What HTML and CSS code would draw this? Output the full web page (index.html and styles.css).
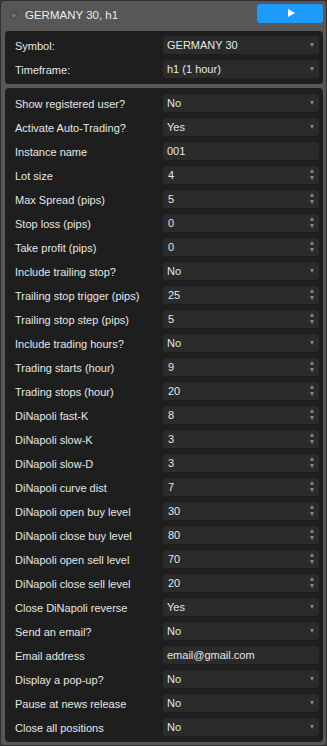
FILE: index.html
```html
<!doctype html>
<html>
<head>
<meta charset="utf-8">
<title>GERMANY 30, h1</title>
<link rel="stylesheet" href="styles.css">
</head>
<body>
<div class="win">
    <div class="head">
        <span class="dot"></span>
        <span class="title">GERMANY 30, h1</span>
        <button class="runBtn" type="button"><i></i></button>
    </div>

    <div class="panel">
        <div class="row"><label>Symbol:</label><div class="field sel">GERMANY 30</div></div>
        <div class="row"><label>Timeframe:</label><div class="field sel">h1 (1 hour)</div></div>
    </div>

    <div class="panel">
        <div class="row"><label>Show registered user?</label><div class="field sel">No</div></div>
        <div class="row"><label>Activate Auto-Trading?</label><div class="field sel">Yes</div></div>
        <div class="row"><label>Instance name</label><div class="field">001</div></div>
        <div class="row"><label>Lot size</label><div class="field num">4</div></div>
        <div class="row"><label>Max Spread (pips)</label><div class="field num">5</div></div>
        <div class="row"><label>Stop loss (pips)</label><div class="field num">0</div></div>
        <div class="row"><label>Take profit (pips)</label><div class="field num">0</div></div>
        <div class="row"><label>Include trailing stop?</label><div class="field sel">No</div></div>
        <div class="row"><label>Trailing stop trigger (pips)</label><div class="field num">25</div></div>
        <div class="row"><label>Trailing stop step (pips)</label><div class="field num">5</div></div>
        <div class="row"><label>Include trading hours?</label><div class="field sel">No</div></div>
        <div class="row"><label>Trading starts (hour)</label><div class="field num">9</div></div>
        <div class="row"><label>Trading stops (hour)</label><div class="field num">20</div></div>
        <div class="row"><label>DiNapoli fast-K</label><div class="field num">8</div></div>
        <div class="row"><label>DiNapoli slow-K</label><div class="field num">3</div></div>
        <div class="row"><label>DiNapoli slow-D</label><div class="field num">3</div></div>
        <div class="row"><label>DiNapoli curve dist</label><div class="field num">7</div></div>
        <div class="row"><label>DiNapoli open buy level</label><div class="field num">30</div></div>
        <div class="row"><label>DiNapoli close buy level</label><div class="field num">80</div></div>
        <div class="row"><label>DiNapoli open sell level</label><div class="field num">70</div></div>
        <div class="row"><label>DiNapoli close sell level</label><div class="field num">20</div></div>
        <div class="row"><label>Close DiNapoli reverse</label><div class="field sel">Yes</div></div>
        <div class="row"><label>Send an email?</label><div class="field sel">No</div></div>
        <div class="row"><label>Email address</label><div class="field">email@gmail.com</div></div>
        <div class="row"><label>Display a pop-up?</label><div class="field sel">No</div></div>
        <div class="row"><label>Pause at news release</label><div class="field sel">No</div></div>
        <div class="row"><label>Close all positions</label><div class="field sel">No</div></div>
    </div>
</div>
</body>
</html>
```

FILE: styles.css
```css
*{ margin:0; padding:0; box-sizing:border-box}
body{ background:#3a3a3a; font-family:"Liberation Sans", Arial, sans-serif; font-size:11px; color:#e6e6e6}
.win{ width:327px; height:746px; background:#575757; border:1px solid #2f2f2f; border-radius:4px; padding:0 3px 3px 4px; display:flex; flex-direction:column; gap:4px}
.head{ height:29px; display:flex; align-items:center; padding:1px 0 0 5px}
.head .dot{ width:7px; height:7px; border-radius:50%; background:#6e6e6e; border:1px solid #3c3c3c; margin:2px 8px 0 0}
.head .title{ flex:1; font-size:11.5px; color:#ececec; padding-top:1px}
.runBtn{ width:66px; height:19px; border:none; border-radius:3px; background:#1c9bfb; display:flex; align-items:center; justify-content:center; margin-top:-3px}
.runBtn i{ width:0; height:0; border-left:7px solid #fff; border-top:4px solid transparent; border-bottom:4px solid transparent; margin-left:2px}
.panel{ background:#1e1e1e; border-radius:4px; padding:2px 4px 3px 10px}
.panel + .panel{ flex:1; padding-top:3px}
.row{ height:24px; display:flex; align-items:center}
.row label{ flex:1; padding-top:2px}
.field{ width:156px; height:18px; background:#2b2b2b; border-radius:3px; padding:1px 0 0 4px; line-height:17px; position:relative}
.field.sel::after{ content:""; position:absolute; right:5px; top:7px; border-top:4px solid #8a8a8a; border-left:2.5px solid transparent; border-right:2.5px solid transparent}
.field.num{ padding-left:5px}
.field.num::before,
.field.num::after{ content:""; position:absolute; right:5px; border-left:2.5px solid transparent; border-right:2.5px solid transparent}
.field.num::before{ top:3px; border-bottom:4px solid #8a8a8a}
.field.num::after{ top:10px; border-top:4px solid #8a8a8a}
```
